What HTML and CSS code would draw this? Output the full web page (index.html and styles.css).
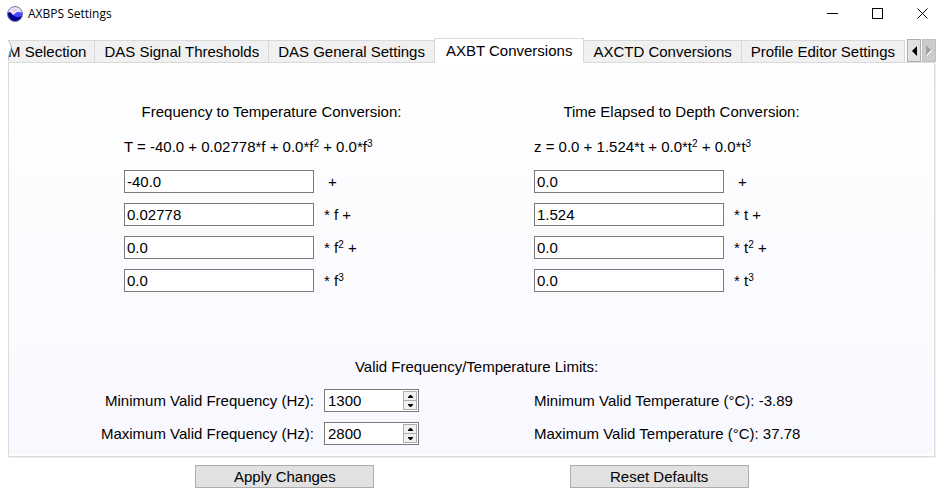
FILE: index.html
```
<!DOCTYPE html>
<html lang="en">
<head>
    <meta charset="UTF-8">
    <meta name="viewport" content="width=device-width, initial-scale=1">
    <title>AXBPS Settings</title>
    <link rel="stylesheet" href="styles.css">
</head>
<body>
    <header class="titlebar">
        <svg class="logo" width="16" height="16" viewBox="0 0 16 16">
            <defs><clipPath id="disc"><circle cx="8" cy="8" r="7.5"/></clipPath></defs>
            <g clip-path="url(#disc)">
                <rect width="16" height="16" fill="#e4e2fa"/>
                <path d="M6 4l2-1 1 2-2 2z" fill="#f3c0d4"/>
                <path d="M6 9c2-1 3-3 5-3s3 1 5 0v9H6z" fill="#4a4aff"/>
                <path d="M0 7c2-1 4-1 5 1s4 3 6 3 4-1 5-2v8H0z" fill="#00008c"/>
            </g>
            <circle cx="8" cy="8" r="7.5" fill="none" stroke="#77779c"/>
        </svg>
        <h1 class="title">AXBPS Settings</h1>
        <div class="caption-buttons">
            <button type="button" aria-label="Minimize">
                <svg width="11" height="11" viewBox="0 0 11 11"><path d="M0 5.5h11" stroke="#000"/></svg>
            </button>
            <button type="button" aria-label="Maximize">
                <svg width="11" height="11" viewBox="0 0 11 11"><rect x=".5" y=".5" width="10" height="10" fill="none" stroke="#000"/></svg>
            </button>
            <button type="button" aria-label="Close">
                <svg width="11" height="11" viewBox="0 0 11 11"><path d="M.5 .5l10 10M10.5 .5l-10 10" stroke="#000"/></svg>
            </button>
        </div>
    </header>

    <main>
        <div class="tabbar">
            <div class="tabs" role="tablist">
                <button class="tab cut" role="tab">M Selection</button>
                <button class="tab" role="tab">DAS Signal Thresholds</button>
                <button class="tab" role="tab">DAS General Settings</button>
                <button class="tab active" role="tab" aria-selected="true">AXBT Conversions</button>
                <button class="tab" role="tab">AXCTD Conversions</button>
                <button class="tab" role="tab">Profile Editor Settings</button>
                <!-- torn edge of the tab that is scrolled out of view -->
                <svg class="tear" width="5" height="22" viewBox="0 0 5 22">
                    <path d="M0 0q5 6 2 11t-2 10z" fill="#fff"/>
                    <path d="M0 0q5 6 2.500 11t-2.500 10" fill="none" stroke="#b8b8b8"/>
                </svg>
            </div>
            <div class="scrollers">
                <button type="button" aria-label="Scroll tabs left">
                    <svg width="5" height="10" viewBox="0 0 5 10"><path d="M5 0v10L0 5z" fill="#000"/></svg>
                </button>
                <button type="button" aria-label="Scroll tabs right" class="off" disabled>
                    <svg width="6" height="11" viewBox="0 0 6 11"><path d="M1 11l5-5V5L1 9z" fill="#fff"/><path d="M0 0v10l5-5z" fill="#a0a0a0"/></svg>
                </button>
            </div>
        </div>

        <div class="panel" role="tabpanel">
            <form class="page" id="settings">
                <section class="group">
                    <h2>Frequency to Temperature Conversion:</h2>
                    <p class="formula">T = -40.0 + 0.02778*f + 0.0*f<sup>2</sup> + 0.0*f<sup>3</sup></p>
                    <div class="row"><input id="f0" type="text" value="-40.0"><label class="plus" for="f0">+</label></div>
                    <div class="row"><input id="f1" type="text" value="0.02778"><label for="f1">* f +</label></div>
                    <div class="row"><input id="f2" type="text" value="0.0"><label for="f2">* f<sup>2</sup> +</label></div>
                    <div class="row"><input id="f3" type="text" value="0.0"><label for="f3">* f<sup>3</sup></label></div>
                </section>
                <section class="group">
                    <h2>Time Elapsed to Depth Conversion:</h2>
                    <p class="formula">z = 0.0 + 1.524*t + 0.0*t<sup>2</sup> + 0.0*t<sup>3</sup></p>
                    <div class="row"><input id="t0" type="text" value="0.0"><label class="plus" for="t0">+</label></div>
                    <div class="row"><input id="t1" type="text" value="1.524"><label for="t1">* t +</label></div>
                    <div class="row"><input id="t2" type="text" value="0.0"><label for="t2">* t<sup>2</sup> +</label></div>
                    <div class="row"><input id="t3" type="text" value="0.0"><label for="t3">* t<sup>3</sup></label></div>
                </section>

                <h2 class="limits-title">Valid Frequency/Temperature Limits:</h2>
                <div class="limits">
                    <div class="row end">
                        <label for="minf">Minimum Valid Frequency (Hz):</label>
                        <div class="spin">
                            <input id="minf" type="number" value="1300">
                            <div class="steps">
                                <button type="button" aria-label="Increase minimum"><svg width="5" height="3" viewBox="0 0 5 3"><path d="M0 3V2l2-2h1l2 2v1z"/></svg></button>
                                <button type="button" aria-label="Decrease minimum"><svg width="5" height="3" viewBox="0 0 5 3"><path d="M0 0v1l2 2h1l2-2V0z"/></svg></button>
                            </div>
                        </div>
                    </div>
                    <div class="row end">
                        <label for="maxf">Maximum Valid Frequency (Hz):</label>
                        <div class="spin">
                            <input id="maxf" type="number" value="2800">
                            <div class="steps">
                                <button type="button" aria-label="Increase maximum"><svg width="5" height="3" viewBox="0 0 5 3"><path d="M0 3V2l2-2h1l2 2v1z"/></svg></button>
                                <button type="button" aria-label="Decrease maximum"><svg width="5" height="3" viewBox="0 0 5 3"><path d="M0 0v1l2 2h1l2-2V0z"/></svg></button>
                            </div>
                        </div>
                    </div>
                </div>
                <div class="limits">
                    <p class="row">Minimum Valid Temperature (°C): -3.89</p>
                    <p class="row">Maximum Valid Temperature (°C): 37.78</p>
                </div>
            </form>
        </div>
    </main>

    <footer class="actions">
        <button type="submit" form="settings">Apply Changes</button>
        <button type="reset" form="settings">Reset Defaults</button>
    </footer>
</body>
</html>
```
FILE: styles.css
```
* {
    box-sizing: border-box;
}
body {
    margin: 0;
    background: #fff;
    color: #000;
    font: 15px/23px "Liberation Sans", Arial, sans-serif;
}
h1, h2, p {
    margin: 0;
    font-size: inherit;
    font-weight: normal;
}
button, input {
    margin: 0;
    padding: 0;
    border: none;
    border-radius: 0;
    color: inherit;
    font: inherit;
}
svg {
    display: block;
}
sup {
    font-size: 10px;
    line-height: 0;
    vertical-align: 5px;
}

/* title bar */
.titlebar {
    display: flex;
    align-items: center;
    height: 27px;
    padding-left: 7px;
}
.title {
    margin-left: 5px;
    font: 12px/16px "Open Sans", "Segoe UI", sans-serif;
}
.caption-buttons {
    display: flex;
    gap: 2px;
    margin-left: auto;
}
.caption-buttons button {
    display: flex;
    align-items: center;
    justify-content: center;
    width: 43px;
    height: 27px;
    background: none;
}

/* tabs */
main {
    margin: 11px 8px 0;
}
.tabbar {
    display: flex;
    justify-content: space-between;
    position: relative;
    z-index: 1;
    margin-bottom: -1px;
}
.tabs {
    display: flex;
    align-items: flex-end;
    position: relative;
    min-width: 0;
    overflow: hidden;
}
.tab {
    flex: none;
    height: 23px;
    padding: 0 9px;
    border: 1px solid #d9d9d9;
    border-left: none;
    background: #f0f0f0;
    line-height: 21px;
    white-space: nowrap;
}
.tab.cut {
    padding: 0 8px 0 0;
}
.tab.active {
    height: 25px;
    margin-left: -1px;
    padding: 0 11px 2px;
    border-left: 1px solid #d9d9d9;
    border-bottom: none;
    background: #fff;
}
.tear {
    position: absolute;
    left: 0;
    bottom: 1px;
}
.scrollers {
    display: flex;
    gap: 1px;
    height: 23px;
    margin-top: 1px;
}
.scrollers button {
    display: flex;
    align-items: center;
    justify-content: center;
    width: 14px;
    border: 1px solid #adadad;
    background: #e1e1e1;
}
.scrollers .off {
    border-color: #bfbfbf;
    background: #ccc;
}

/* tab page */
.panel {
    margin-right: 1px;
    padding: 0 1px 2px 0;
    border: 1px solid #dcdcdc;
    background: #fff;
    box-shadow: 1px 1px 0 #f0f0f0;
}
.page {
    display: grid;
    grid-template-columns: 295px 295px;
    justify-content: center;
    column-gap: 115px;
    padding: 37px 0 9px 11px;
    background: linear-gradient(#fff, #f8f8ff);
}
h2 {
    text-align: center;
}
.group {
    display: flex;
    flex-direction: column;
    gap: 10px;
}
.formula {
    margin: 2px 0;
}
.row {
    display: flex;
    align-items: center;
    gap: 10px;
    height: 23px;
    white-space: nowrap;
}
.row.end {
    justify-content: flex-end;
}
.row input[type="text"] {
    width: 190px;
    height: 23px;
    padding: 0 2px;
    border: 1px solid #7a7a7a;
    background: #fff;
}
.row .plus {
    padding-left: 4px;
}
.limits-title {
    grid-column: 1 / -1;
    margin: 63px 0 11px;
}
.limits {
    display: flex;
    flex-direction: column;
    gap: 10px;
}
.spin {
    display: flex;
    flex: none;
    width: 95px;
    height: 23px;
    padding: 1px;
    border: 1px solid #7a7a7a;
    background: #fff;
}
.spin input {
    flex: 1;
    min-width: 0;
    padding-left: 2px;
    background: none;
    appearance: textfield;
}
.spin input::-webkit-inner-spin-button {
    display: none;
}
.steps {
    display: flex;
    flex-direction: column;
    width: 14px;
}
.steps button {
    display: flex;
    flex: 1;
    align-items: center;
    justify-content: center;
    border: 1px solid #adadad;
    background: #f0f0f0;
}
.steps button + button {
    margin-top: -1px;
}

/* bottom buttons */
.actions {
    display: flex;
    justify-content: space-evenly;
    padding: 8px 0;
}
.actions button {
    width: 179px;
    height: 23px;
    border: 1px solid #adadad;
    background: #e1e1e1;
    line-height: 21px;
}
```
